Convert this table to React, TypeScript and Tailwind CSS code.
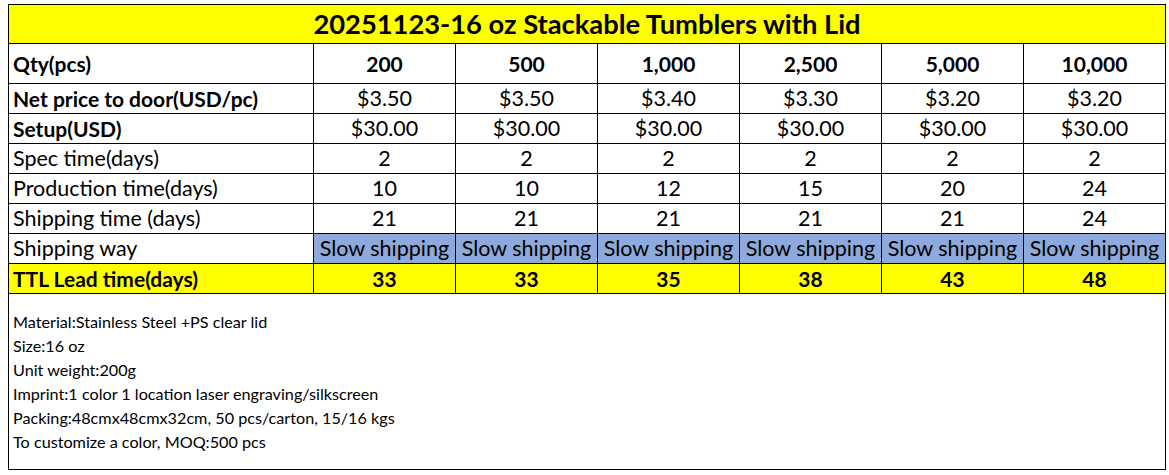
import React from "react";

const cols = ["200", "500", "1,000", "2,500", "5,000", "10,000"];

type Row = {
  label: string;
  values: string[];
  bold?: boolean;
  labelBold?: boolean;
  h: string;
  kind?: "ship" | "ttl";
};

const rows: Row[] = [
  { label: "Qty(pcs)", values: cols, bold: true, labelBold: true, h: "h-[40px]" },
  { label: "Net price to door(USD/pc)", values: ["$3.50", "$3.50", "$3.40", "$3.30", "$3.20", "$3.20"], labelBold: true, h: "h-[30px]" },
  { label: "Setup(USD)", values: Array(6).fill("$30.00"), labelBold: true, h: "h-[30px]" },
  { label: "Spec time(days)", values: Array(6).fill("2"), h: "h-[30px]" },
  { label: "Production time(days)", values: ["10", "10", "12", "15", "20", "24"], h: "h-[30px]" },
  { label: "Shipping time (days)", values: ["21", "21", "21", "21", "21", "24"], h: "h-[30px]" },
  { label: "Shipping way", values: Array(6).fill("Slow shipping"), h: "h-[30px]", kind: "ship" },
  { label: "TTL Lead time(days)", values: ["33", "33", "35", "38", "43", "48"], bold: true, labelBold: true, h: "h-[30px]", kind: "ttl" },
];

const notes = [
  "Material:Stainless Steel +PS clear lid",
  "Size:16 oz",
  "Unit weight:200g",
  "Imprint:1 color 1 location laser engraving/silkscreen",
  "Packing:48cmx48cmx32cm, 50 pcs/carton, 15/16 kgs",
  "To customize a color, MOQ:500 pcs",
];

export default function App() {
  return (
    <div className="w-[1169px] h-[475px] bg-white pt-[4px] pl-[8px] text-black" style={{ fontFamily: "Lato, 'Open Sans', sans-serif" }}>
      <div className="w-[1158px] border-l border-t border-black">
        <div className="h-[39px] bg-[#ffff00] border-r border-b border-black flex items-center justify-center text-[27.3px] font-bold leading-none">
          20251123-16 oz Stackable Tumblers with Lid
        </div>
        {rows.map((r) => (
          <div key={r.label} className={`grid grid-cols-[305px_repeat(6,142px)] ${r.h} ${r.kind === "ttl" ? "bg-[#ffff00]" : ""}`}>
            <div className={`border-r border-b border-black flex items-center pl-[4px] leading-none whitespace-nowrap ${r.labelBold ? "font-bold text-[21px]" : "text-[21.5px]"}`}>
              {r.label}
            </div>
            {r.values.map((v, i) => (
              <div
                key={i}
                className={`border-r border-b border-black flex items-center justify-center leading-none whitespace-nowrap ${r.bold ? "font-bold text-[21px]" : "text-[21.5px]"} ${r.kind === "ship" ? "bg-[#8ea9db]" : ""}`}
              >
                {v}
              </div>
            ))}
          </div>
        ))}
        <div className="h-[176px] border-r border-b border-black pl-[4px] pt-[16px] text-[16.2px] leading-[24px]">
          {notes.map((n) => (
            <div key={n}>{n}</div>
          ))}
        </div>
      </div>
    </div>
  );
}
